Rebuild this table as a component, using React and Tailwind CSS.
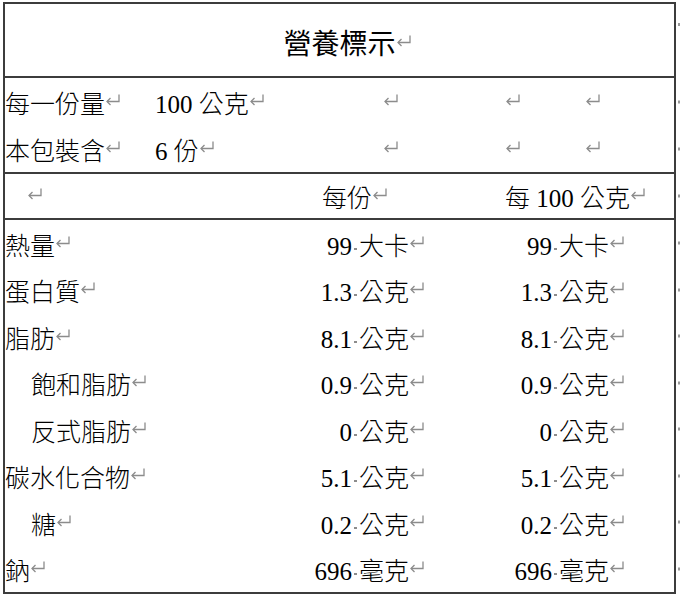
import React from "react";

const Mark = ({ className = "" }) => (
  <svg
    viewBox="0 0 16 12"
    className={"inline-block w-[16px] h-[12px] align-[7px] " + className}
    fill="none"
    stroke="#8c8c8c"
    strokeWidth="1.3"
  >
    <path d="M14 0.5V7.5H2" />
    <path d="M5.5 4L2 7.5L5.5 11" />
  </svg>
);

const Space = () => (
  <span className="inline-block w-[3px] h-[2px] mx-[2px] bg-[#8c8c8c] align-[5px]" />
);

const EndDot = ({ className = "top-1/2 -translate-y-1/2" }) => (
  <span className={"absolute -right-[6px] w-[2px] h-[3px] bg-[#9a9a9a] " + className} />
);

const rows = [
  { label: "熱量", num: "99", unit: "大卡" },
  { label: "蛋白質", num: "1.3", unit: "公克" },
  { label: "脂肪", num: "8.1", unit: "公克" },
  { label: "飽和脂肪", num: "0.9", unit: "公克", sub: true },
  { label: "反式脂肪", num: "0", unit: "公克", sub: true },
  { label: "碳水化合物", num: "5.1", unit: "公克" },
  { label: "糖", num: "0.2", unit: "公克", sub: true },
  { label: "鈉", num: "696", unit: "毫克" },
];

export default function App() {
  return (
    <div className="w-[680px] h-[598px] bg-white pt-[2px] pl-[3px] font-['Liberation_Serif','Noto_Sans_CJK_TC',serif] font-light text-black text-[25px] leading-none">
      <div className="w-[673px] border-2 border-[#3c3c3c]">
        {/* title */}
        <div className="relative h-[74px] flex items-center justify-center pt-[9px] border-b-2 border-[#3c3c3c] text-[28px] font-normal">
          <span className="whitespace-nowrap">
            營養標示
            <Mark className="-mr-[16px]" />
          </span>
          <EndDot className="top-[19px]" />
        </div>

        {/* serving */}
        <div className="border-b-2 border-[#3c3c3c]">
          {[
            ["每一份量", "100 公克"],
            ["本包裝含", "6 份"],
          ].map(([a, b]) => (
            <div key={a} className="relative h-[47px] flex items-center pt-[6px] whitespace-nowrap">
              <div className="w-[150px]">
                {a}
                <Mark />
              </div>
              <div className="w-[228px]">
                {b}
                <Mark />
              </div>
              <div className="w-[122px]">
                <Mark />
              </div>
              <div className="w-[80px]">
                <Mark />
              </div>
              <div className="flex-1">
                <Mark />
              </div>
              <EndDot />
            </div>
          ))}
        </div>

        {/* column header */}
        <div className="relative h-[46px] flex items-center pt-[5px] whitespace-nowrap border-b-2 border-[#3c3c3c]">
          <div className="w-[317px] pl-[22px]">
            <Mark />
          </div>
          <div className="w-[183px]">
            每份
            <Mark />
          </div>
          <div className="flex-1">
            每 100 公克
            <Mark />
          </div>
          <EndDot />
        </div>

        {/* nutrients */}
        {rows.map((r) => (
          <div key={r.label} className="relative h-[46.5px] flex items-center pt-[6px] whitespace-nowrap">
            <div className={"w-[220px] " + (r.sub ? "pl-[26px]" : "")}>
              {r.label}
              <Mark />
            </div>
            <div className="w-[200px] text-right">
              {r.num}
              <Space />
              {r.unit}
              <Mark />
            </div>
            <div className="w-[200px] text-right">
              {r.num}
              <Space />
              {r.unit}
              <Mark />
            </div>
            <div className="flex-1" />
            <EndDot />
          </div>
        ))}
      </div>
    </div>
  );
}
